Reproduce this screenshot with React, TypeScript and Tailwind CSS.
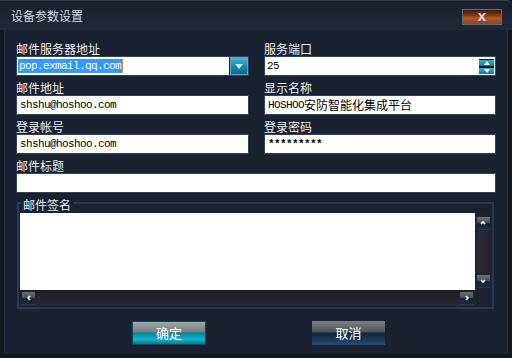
import React from "react";

const mono = "font-['Liberation_Mono',monospace] text-[11px] tracking-[-0.6px] text-black";

function Chevron({ dir }: { dir: "up" | "down" | "left" | "right" }) {
  const d =
    dir === "up"
      ? "M2 5 L4 3 L6 5"
      : dir === "down"
      ? "M2 3 L4 5 L6 3"
      : dir === "left"
      ? "M5 2 L3 4 L5 6"
      : "M3 2 L5 4 L3 6";
  return (
    <svg width="8" height="8" viewBox="0 0 8 8">
      <path d={d} stroke="#ffffff" strokeWidth="1.6" fill="none" />
    </svg>
  );
}

function ScrollBtn({ dir }: { dir: "up" | "down" | "left" | "right" }) {
  return (
    <div className="w-[13px] h-[13px] flex items-center justify-center bg-[linear-gradient(to_bottom,#6b7079_0%,#4a5059_45%,#1a2232_55%,#172a44_100%)] border-b border-[#1e3a5c]">
      <Chevron dir={dir} />
    </div>
  );
}

function Label({ children }: { children: React.ReactNode }) {
  return (
    <div className="h-[19px] flex items-end text-[12px] leading-[14px] text-[#eeeeef]">{children}</div>
  );
}

function Input({ children }: { children?: React.ReactNode }) {
  return (
    <div className="h-[20px] border border-[#34435c] bg-white flex items-center pl-[3px]">
      {children}
    </div>
  );
}

export default function App() {
  return (
    <div className="w-[512px] h-[358px] bg-[#121722] flex flex-col overflow-hidden font-['Noto_Sans_CJK_SC','Liberation_Sans',sans-serif]">
      {/* title bar */}
      <div className="h-[30px] shrink-0 border-t border-[#34405a] rounded-tr-[6px] bg-[linear-gradient(to_bottom,#1a1f2c_0%,#1e2534_60%,#222a3a_100%)] flex items-center justify-between pl-[11px] pr-[10px]">
        <span className="text-[12px] leading-[14px] text-[#cddcec]">设备参数设置</span>
        <div className="w-[40px] h-[16px] mt-[2px] border border-[#666a70] bg-[linear-gradient(to_bottom,#3a1e14_0%,#7a3412_35%,#b8561a_60%,#7a4a36_100%)] flex items-center justify-center">
          <span className="font-['Liberation_Sans',sans-serif] font-bold text-[15px] leading-[12px] text-[#dcdcdc] -mt-[2px]">x</span>
        </div>
      </div>

      {/* body */}
      <div className="flex-1 mx-[4px] mb-[4px] bg-[#1a2131] border-l border-r border-[#242d40] px-[11px] pt-[7px] flex flex-col">
        <div className="grid grid-cols-[233px_232px] gap-x-[15px]">
          {/* row 1 */}
          <div>
            <Label>邮件服务器地址</Label>
            <div className="h-[20px] border border-[#34435c] bg-[#1b2232] flex">
              <div className="flex-1 bg-white flex items-center pl-[1px]">
                <span className={`${mono} bg-[#3399ff] text-white h-[14px] leading-[14px] px-[1px]`}>pop.exmail.qq.com</span>
                <span className="w-[1px] h-[14px] bg-[#d08a3a]" />
              </div>
              <div className="w-[18px] ml-[1px] border border-[#5aa8c4] bg-[linear-gradient(to_bottom,#4cb2d0_0%,#1a8cb0_50%,#0a6a8c_100%)] flex items-center justify-center">
                <svg width="8" height="5" viewBox="0 0 8 5">
                  <path d="M0 0 L8 0 L4 5 Z" fill="#c8f0ff" />
                </svg>
              </div>
            </div>
          </div>
          <div>
            <Label>服务端口</Label>
            <div className="h-[20px] border border-[#34435c] bg-white flex items-center pl-[2px]">
              <span className={`${mono} flex-1`}>25</span>
              <div className="w-[15px] h-[15px] mr-[1px] flex flex-col bg-[#0c2a3a]">
                <div className="h-[1px] bg-[#0a1a24]" />
                <div className="h-[6px] bg-[linear-gradient(to_bottom,#3ab0cc,#0d7a9a)] flex items-center justify-center">
                  <svg width="6" height="4" viewBox="0 0 6 4"><path d="M0 4 L6 4 L3 0 Z" fill="#e0f8ff" /></svg>
                </div>
                <div className="h-[2px] bg-[#0a1a24]" />
                <div className="h-[6px] bg-[linear-gradient(to_bottom,#3ab0cc,#0d7a9a)] flex items-center justify-center">
                  <svg width="6" height="4" viewBox="0 0 6 4"><path d="M0 0 L6 0 L3 4 Z" fill="#e0f8ff" /></svg>
                </div>
              </div>
            </div>
          </div>

          {/* row 2 */}
          <div>
            <Label>邮件地址</Label>
            <Input><span className={mono}>shshu@hoshoo.com</span></Input>
          </div>
          <div>
            <Label>显示名称</Label>
            <Input>
              <span className={mono}>HOSHOO</span>
              <span className="text-[12px] leading-[14px] text-black">安防智能化集成平台</span>
            </Input>
          </div>

          {/* row 3 */}
          <div>
            <Label>登录帐号</Label>
            <Input><span className={mono}>shshu@hoshoo.com</span></Input>
          </div>
          <div>
            <Label>登录密码</Label>
            <Input><span className={`${mono} font-bold`}>*********</span></Input>
          </div>

          {/* row 4 */}
          <div className="col-span-2">
            <Label>邮件标题</Label>
            <Input />
          </div>
        </div>

        {/* signature group */}
        <fieldset className="mt-[2px] ml-[1px] mr-[2px] border-2 border-[#2b3850] px-[1px] pb-[1px]">
          <legend className="ml-[1px] px-[2px] pt-[4px] text-[12px] leading-[12px] text-[#eeeeef]">邮件签名</legend>
          <div className="mt-[2px] flex h-[93px]">
            <div className="flex-1 flex flex-col">
              <div className="flex-1 bg-white" />
              <div className="h-[16px] bg-[linear-gradient(to_bottom,#1c1f27,#262932)] flex items-center justify-between pl-[2px] pr-[2px]">
                <ScrollBtn dir="left" />
                <ScrollBtn dir="right" />
              </div>
            </div>
            <div className="w-[16px] flex flex-col items-center bg-[#1c2230]">
              <div className="h-[4px]" />
              <ScrollBtn dir="up" />
              <div className="flex-1 w-[13px] my-[1px] bg-[linear-gradient(to_right,#2a2c34,#23252c)]" />
              <ScrollBtn dir="down" />
              <div className="h-[18px]" />
            </div>
          </div>
        </fieldset>

        {/* buttons */}
        <div className="mt-[12px] flex pl-[116px] gap-[106px]">
          <div className="w-[74px] h-[24px] border border-[#0f4c5a] bg-[linear-gradient(to_bottom,#a2a6a6_0%,#748080_45%,#0a8299_50%,#13b4ca_80%,#087890_100%)] flex items-center justify-center text-[13px] leading-[14px] text-white">
            确定
          </div>
          <div className="w-[73px] h-[24px] bg-[linear-gradient(to_bottom,#7c8080_0%,#4c5558_45%,#12253c_50%,#1b3a5c_80%,#24507a_100%)] flex items-center justify-center text-[13px] leading-[14px] text-white">
            取消
          </div>
        </div>
      </div>
    </div>
  );
}
